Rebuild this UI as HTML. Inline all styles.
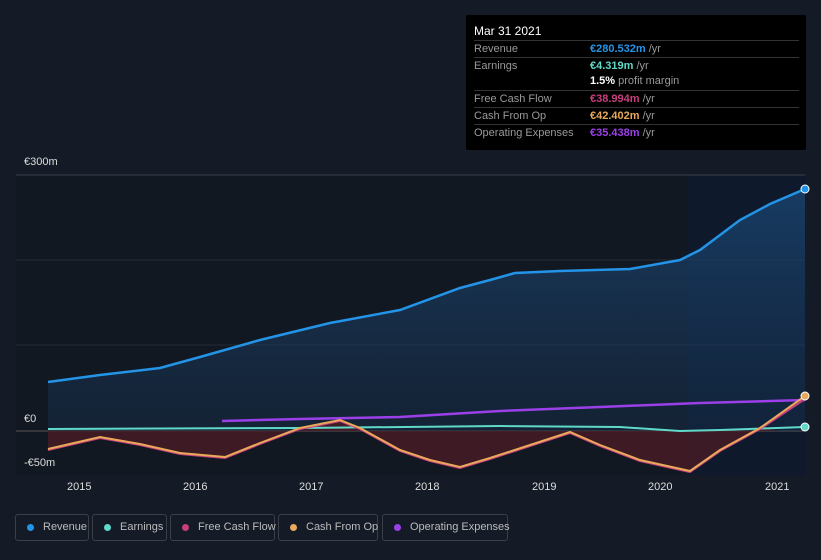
<!DOCTYPE html>
<html><head><meta charset="utf-8"><style>
html,body{margin:0;width:821px;height:560px;overflow:hidden}
body{background:#151b26;font-family:"Liberation Sans",sans-serif;position:relative}
.tt{position:absolute;left:466px;top:15px;width:340px;height:135px;background:#000;border-radius:2px;color:#999;font-size:11px}
.tt .h{position:absolute;left:8px;top:9px;color:#fff;font-size:12px}
.row{position:absolute;left:8px;width:325px;border-top:1px solid #333;height:16px;line-height:16px;white-space:nowrap}
.row span.v{position:absolute;left:116px}
.leg{position:absolute;top:514px;height:27px;border:1px solid #3a3f4a;border-radius:3px;color:#bbb;font-size:11px;line-height:25px;box-sizing:border-box;white-space:nowrap}
.leg i{position:absolute;left:11px;top:9px;width:7px;height:7px;border-radius:50%}
.leg span{position:absolute;left:27px}
.ax{position:absolute;color:#ddd;font-size:11px}
</style></head><body>
<svg width="821" height="560" style="position:absolute;left:0;top:0">
<rect x="16" y="175" width="789" height="300" fill="#121821"/>
<rect x="688" y="175" width="117" height="300" fill="#0e1a2c"/>
<line x1="16" y1="175" x2="805" y2="175" stroke="#3a404a"/>
<line x1="16" y1="260" x2="805" y2="260" stroke="#262c36"/>
<line x1="16" y1="345" x2="805" y2="345" stroke="#262c36"/>
<line x1="16" y1="431" x2="805" y2="431" stroke="#555"/>
<defs><linearGradient id="g" x1="0" y1="0" x2="0" y2="1"><stop offset="0" stop-color="#1c4a7a" stop-opacity=".7"/><stop offset="1" stop-color="#173252" stop-opacity=".4"/></linearGradient></defs>
<path d="M48,382 L100,375 L160,368 L200,357 L260,340 L330,323 L400,310 L460,288 L490,280 L515,273 L560,271 L630,269 L680,260 L700,250 L740,220 L770,204 L805,189 L805,431 L48,431Z" fill="url(#g)"/>
<path d="M48,449 L100,437 L140,444 L180,453 L225,457 L260,443 L300,428 L340,420 L360,428 L400,450 L430,460 L460,467 L490,458 L530,445 L570,432 L600,445 L640,460 L690,471 L720,450 L760,428 L780,431 L48,431Z" fill="#4a1c26" opacity=".8"/>
<path d="M48,382 L100,375 L160,368 L200,357 L260,340 L330,323 L400,310 L460,288 L490,280 L515,273 L560,271 L630,269 L680,260 L700,250 L740,220 L770,204 L805,189" fill="none" stroke="#2394e8" stroke-width="2.5"/>
<path d="M48,429 L300,428 L500,426 L620,427 L680,431 L720,430 L805,427" fill="none" stroke="#5fd9c8" stroke-width="2"/>
<path d="M222,421 L300,419 L400,417 L500,411 L600,407 L700,403 L805,400" fill="none" stroke="#9b40e8" stroke-width="2.5"/>
<path d="M48,450 L100,438 L140,445 L180,454 L225,458 L260,444 L300,429 L340,421 L360,429 L400,451 L430,461 L460,468 L490,459 L530,446 L570,433 L600,446 L640,461 L690,472 L720,451 L760,429 L805,399" fill="none" stroke="#c83e7e" stroke-width="2"/>
<path d="M48,449 L100,437 L140,444 L180,453 L225,457 L260,443 L300,428 L340,420 L360,428 L400,450 L430,460 L460,467 L490,458 L530,445 L570,432 L600,445 L640,460 L690,471 L720,450 L760,428 L805,396" fill="none" stroke="#e8a95a" stroke-width="2"/>
<circle cx="805" cy="189" r="4" fill="#2394e8" stroke="#fff" stroke-width="1"/>
<circle cx="805" cy="396" r="4" fill="#e8a95a" stroke="#fff" stroke-width="1"/>
<circle cx="805" cy="427" r="4" fill="#5fd9c8" stroke="#fff" stroke-width="1"/>
</svg>
<div class="ax" style="left:24px;top:156px">€300m</div>
<div class="ax" style="left:24px;top:413px">€0</div>
<div class="ax" style="left:24px;top:457px">-€50m</div>
<div class="ax" style="left:67px;top:481px">2015</div>
<div class="ax" style="left:183px;top:481px">2016</div>
<div class="ax" style="left:299px;top:481px">2017</div>
<div class="ax" style="left:415px;top:481px">2018</div>
<div class="ax" style="left:532px;top:481px">2019</div>
<div class="ax" style="left:648px;top:481px">2020</div>
<div class="ax" style="left:765px;top:481px">2021</div>
<div class="tt"><div class="h">Mar 31 2021</div>
<div class="row" style="top:25px">Revenue<span class="v"><b style="color:#2394e8">€280.532m</b> /yr</span></div>
<div class="row" style="top:42px">Earnings<span class="v"><b style="color:#5fd9c8">€4.319m</b> /yr</span></div>
<div class="row" style="top:58px;border:0"><span class="v"><b style="color:#fff">1.5%</b> profit margin</span></div>
<div class="row" style="top:75px">Free Cash Flow<span class="v"><b style="color:#c83e7e">€38.994m</b> /yr</span></div>
<div class="row" style="top:92px">Cash From Op<span class="v"><b style="color:#e8a95a">€42.402m</b> /yr</span></div>
<div class="row" style="top:109px">Operating Expenses<span class="v"><b style="color:#9b40e8">€35.438m</b> /yr</span></div>
</div>
<div class="leg" style="left:15px;width:74px"><i style="background:#2394e8"></i><span>Revenue</span></div>
<div class="leg" style="left:92px;width:75px"><i style="background:#5fd9c8"></i><span>Earnings</span></div>
<div class="leg" style="left:170px;width:105px"><i style="background:#c83e7e"></i><span>Free Cash Flow</span></div>
<div class="leg" style="left:278px;width:100px"><i style="background:#e8a95a"></i><span>Cash From Op</span></div>
<div class="leg" style="left:382px;width:126px"><i style="background:#9b40e8"></i><span>Operating Expenses</span></div>
</body></html>
